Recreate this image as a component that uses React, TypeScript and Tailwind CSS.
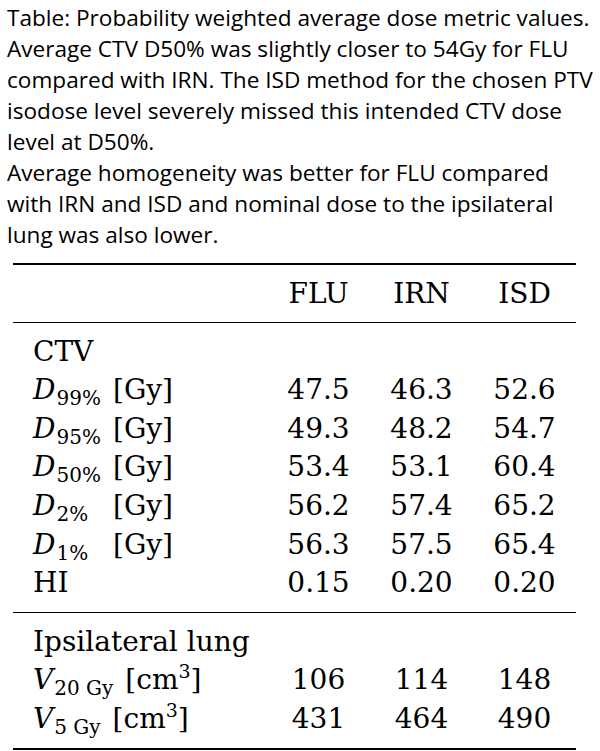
const serif = 'font-["DejaVu_Serif",serif]';

type Row = { label: React.ReactNode; values: string[] };

function DLabel({ sub }: { sub: string }) {
  return (
    <span className="inline-flex items-baseline">
      <span className="inline-block w-[80px]">
        <i>D</i>
        <sub className="relative top-[6px] ml-[1px] text-[20px] align-baseline">{sub}</sub>
      </span>
      <span>[Gy]</span>
    </span>
  );
}

function VLabel({ sub }: { sub: string }) {
  return (
    <span>
      <i>V</i>
      <sub className="relative top-[6px] ml-[1px] mr-[12px] text-[20px] align-baseline">{sub}</sub>
      [cm<sup className="relative -top-[11px] text-[19px] align-baseline">3</sup>]
    </span>
  );
}

const ctvRows: Row[] = [
  { label: <DLabel sub="99%" />, values: ['47.5', '46.3', '52.6'] },
  { label: <DLabel sub="95%" />, values: ['49.3', '48.2', '54.7'] },
  { label: <DLabel sub="50%" />, values: ['53.4', '53.1', '60.4'] },
  { label: <DLabel sub="2%" />, values: ['56.2', '57.4', '65.2'] },
  { label: <DLabel sub="1%" />, values: ['56.3', '57.5', '65.4'] },
  { label: 'HI', values: ['0.15', '0.20', '0.20'] },
];

const lungRows: Row[] = [
  { label: <VLabel sub="20 Gy" />, values: ['106', '114', '148'] },
  { label: <VLabel sub="5 Gy" />, values: ['431', '464', '490'] },
];

function TableRow({ label, values }: Row) {
  return (
    <div className="grid grid-cols-[254px_103px_103px_103px] leading-[38.6px]">
      <div className="pl-[20px] whitespace-nowrap">{label}</div>
      {values.map((v, i) => (
        <div key={i} className="text-center">
          {v}
        </div>
      ))}
    </div>
  );
}

export default function App() {
  return (
    <div className="w-[600px] h-[751px] bg-white text-black overflow-hidden">
      <p className='pt-[2px] pl-[7px] font-["Open_Sans",sans-serif] text-[22.6px] leading-[31px] whitespace-nowrap'>
        Table: Probability weighted average dose metric values.
        <br />
        Average CTV D50% was slightly closer to 54Gy for FLU
        <br />
        compared with IRN. The ISD method for the chosen PTV
        <br />
        isodose level severely missed this intended CTV dose
        <br />
        level at D50%.
        <br />
        Average homogeneity was better for FLU compared
        <br />
        with IRN and ISD and nominal dose to the ipsilateral
        <br />
        lung was also lower.
      </p>

      <div className={`mt-[13px] ml-[13px] w-[563px] text-[28px] ${serif}`}>
        <div className="h-[2px] bg-black" />
        <div className="pt-[10px] pb-[8px]">
          <TableRow label="" values={['FLU', 'IRN', 'ISD']} />
        </div>
        <div className="h-px bg-black" />
        <div className="pt-[10px] pb-[9px]">
          <TableRow label="CTV" values={['', '', '']} />
          {ctvRows.map((r, i) => (
            <TableRow key={i} {...r} />
          ))}
        </div>
        <div className="h-px bg-black" />
        <div className="pt-[10px] pb-[9px]">
          <TableRow label="Ipsilateral lung" values={['', '', '']} />
          {lungRows.map((r, i) => (
            <TableRow key={i} {...r} />
          ))}
        </div>
        <div className="h-[2px] bg-black" />
      </div>
    </div>
  );
}
